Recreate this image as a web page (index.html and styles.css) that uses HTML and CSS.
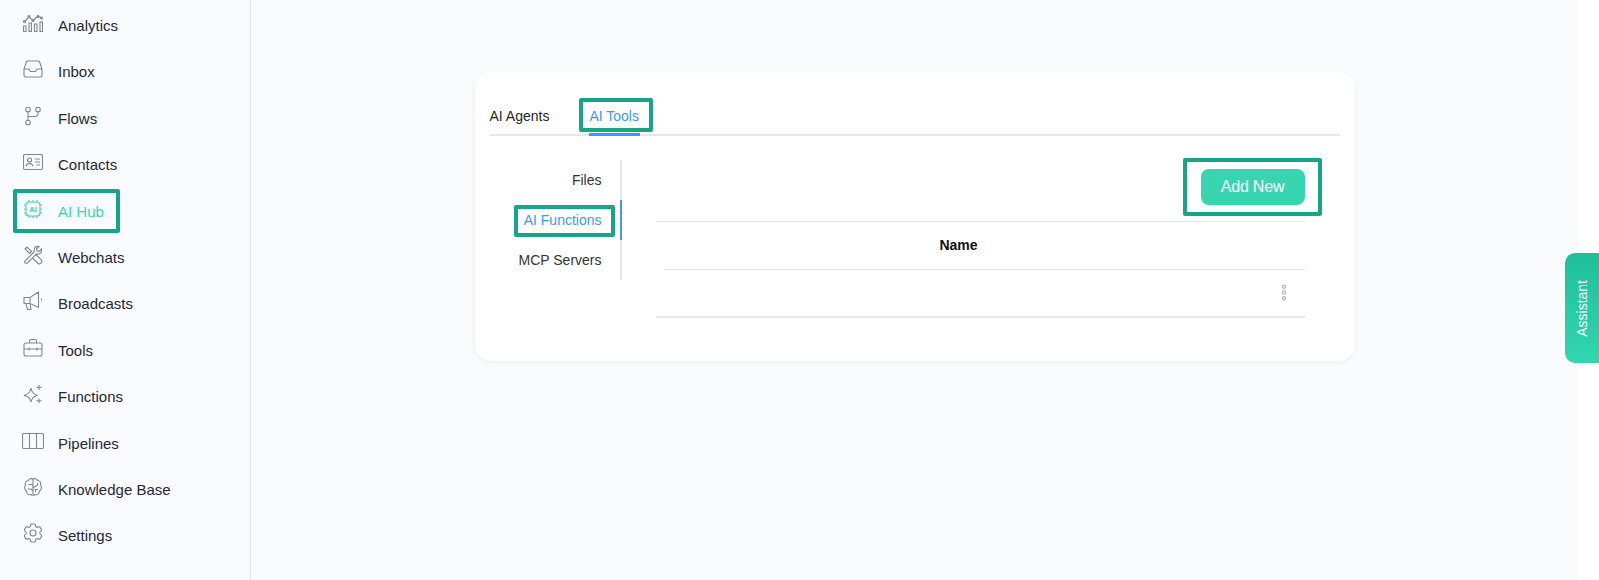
FILE: index.html
```html
<!DOCTYPE html>
<html lang="en">
<head>
  <meta charset="UTF-8">
  <title>AI Hub</title>
  <link rel="stylesheet" href="styles.css">
</head>
<body>
  <aside class="sidebar">
    <a class="nav-item"><svg class="nav-icon nav-icon-wide" viewBox="0 0 20 18"><path d="M1.500 7.500 6 3 10 6.500 15 2 18.500 4"/><circle cx="1.500" cy="7.500" r="1"/><circle cx="6" cy="2.500" r="1"/><circle cx="10" cy="6.500" r="1"/><circle cx="15" cy="2.500" r="1"/><circle cx="18.500" cy="4" r="1"/><rect x=".5" y="12" width="2.500" height="5.500"/><rect x="6" y="9" width="2.500" height="8.500"/><rect x="11.500" y="10" width="2.500" height="7.500"/><rect x="17" y="8" width="2.500" height="9.500"/></svg><span>Analytics</span></a>
    <a class="nav-item"><svg class="nav-icon" viewBox="0 0 20 20"><path d="M1 10 3.500 2.500Q4 2 5 2H15Q16 2 16.500 2.500L19 10V16Q19 18 17.500 18H2.500Q1 18 1 16ZM1 10H6L7.500 12.500H12.500L14 10H19"/></svg><span>Inbox</span></a>
    <a class="nav-item"><svg class="nav-icon" viewBox="0 0 20 20"><circle cx="5" cy="3.500" r="2.300"/><circle cx="15" cy="3.500" r="2.300"/><circle cx="5" cy="16.500" r="2.300"/><path d="M5 5.800V14.200M5 10.500H12Q15 10.500 15 7V5.800"/></svg><span>Flows</span></a>
    <a class="nav-item"><svg class="nav-icon nav-icon-wide" viewBox="0 0 20 16"><rect x=".5" y=".5" width="19" height="15" rx="1.500"/><circle cx="6.500" cy="6" r="2"/><path d="M3 12.500Q3.500 9.500 6.500 9.500T10 12.500M12 5H17M12 8H17M13.500 11H17"/></svg><span>Contacts</span></a>

    <a class="nav-item nav-item-active"><svg class="nav-icon" viewBox="0 0 20 20"><rect x="3" y="3" width="14" height="14" rx="3"/><path d="M6 1V3M10 1V3M14 1V3M6 17V19M10 17V19M14 17V19M1 6H3M1 10H3M1 14H3M17 6H19M17 10H19M17 14H19"/><text class="chip-label" x="10" y="12.800" text-anchor="middle">AI</text></svg><span>AI Hub</span><i class="mark"></i></a>

    <a class="nav-item"><svg class="nav-icon" viewBox="0 0 20 20"><path d="M2 4 4 2 8.500 6.500 6.500 8.500ZM11.500 11 13 9.500 18.500 15Q19.500 16.500 18 18T15 18.500L9.500 13M8 10 2 16Q1 17.500 2.500 18T4.500 18L10 12.500 13 9Q15 9.500 17 8.500T18.500 4L16 6.500 14 6 13.500 4 16 1.500Q14 1 12.500 2T11 7Z"/></svg><span>Webchats</span></a>
    <a class="nav-item"><svg class="nav-icon" viewBox="0 0 20 20"><path d="M1 6.500H7L15.500 1V16.500L7 12.500H1ZM3 12.500 4.500 18.500H8L7 12.500M7 6.500V12.500M18.500 7.500V9.500"/></svg><span>Broadcasts</span></a>
    <a class="nav-item"><svg class="nav-icon" viewBox="0 0 20 20"><rect x="1" y="5" width="18" height="13" rx="2"/><path d="M6.500 5V3Q6.500 1.500 8 1.500H12Q13.500 1.500 13.500 3V5M1 11H19M6 9.500V12.500M14 9.500V12.500"/></svg><span>Tools</span></a>
    <a class="nav-item"><svg class="nav-icon" viewBox="0 0 20 20"><path d="M8 4Q9 10 14.500 11.500 9 12.500 8 18 7 12.500 1 11.500 7 10 8 4ZM16 1V6M13.500 3.500H18.500M16 14.500V19M13.500 16.700H18.500"/></svg><span>Functions</span></a>
    <a class="nav-item"><svg class="nav-icon nav-icon-wider" viewBox="0 0 22 16"><rect x=".5" y=".5" width="21" height="15" rx="1.500"/><path d="M7.500 .5V15.500M14.500 .5V15.500"/></svg><span>Pipelines</span></a>
    <a class="nav-item"><svg class="nav-icon" viewBox="0 0 20 20"><path d="M10 2.500C8.500 1 6 1.500 5.500 3.500 3 3.500 1.500 6 2.500 8 1 10 1.500 13 3.500 14 3.500 16.500 6 18.500 8 17.500 9 18.500 11 18.500 12 17.500 14 18.500 16.500 16.500 16.500 14 18.500 13 19 10 17.500 8 18.500 6 17 3.500 14.500 3.500 14 1.500 11.500 1 10 2.500ZM10 2.500V17.500M5.500 7.500H8Q10 7.500 10 9.500M14.500 6V8L10 11M5 12H8L10 14M15 12.500H12.500V15"/></svg><span>Knowledge Base</span></a>
    <a class="nav-item"><svg class="nav-icon" viewBox="2 2 20 20"><circle cx="12" cy="12" r="3"/><path d="M9.594 3.940c.09-.542.56-.94 1.110-.94h2.593c.55 0 1.020.398 1.110.94l.213 1.281c.063.374.313.686.645.870.074.040.147.083.22.127.325.196.72.257 1.075.124l1.217-.456a1.125 1.125 0 0 1 1.370.49l1.296 2.247a1.125 1.125 0 0 1-.26 1.431l-1.003.827c-.293.241-.438.613-.43.992a7.723 7.723 0 0 1 0 .255c-.008.378.137.75.43.991l1.004.827c.424.35.534.955.26 1.430l-1.298 2.247a1.125 1.125 0 0 1-1.369.491l-1.217-.456c-.355-.133-.75-.072-1.076.124a6.470 6.470 0 0 1-.22.128c-.331.183-.581.495-.644.869l-.213 1.281c-.09.543-.56.94-1.110.94h-2.594c-.55 0-1.019-.398-1.110-.94l-.213-1.281c-.062-.374-.312-.686-.644-.87a6.520 6.520 0 0 1-.22-.127c-.325-.196-.72-.257-1.076-.124l-1.217.456a1.125 1.125 0 0 1-1.369-.49l-1.297-2.247a1.125 1.125 0 0 1 .26-1.431l1.004-.827c.292-.24.437-.613.43-.991a6.932 6.932 0 0 1 0-.255c.007-.38-.138-.751-.43-.992l-1.004-.827a1.125 1.125 0 0 1-.26-1.430l1.297-2.247a1.125 1.125 0 0 1 1.370-.491l1.216.456c.356.133.751.072 1.076-.124.072-.044.146-.086.22-.128.332-.183.582-.495.644-.869l.214-1.280Z"/></svg><span>Settings</span></a>
  </aside>

  <main class="content">
    <section class="card">
      <div class="tabs">
        <div class="tab">AI Agents</div>
        <div class="tab tab-active">AI Tools<i class="mark"></i></div>
      </div>
      <div class="panel">
        <div class="side-tabs">
          <div class="side-tab">Files</div>
          <div class="side-tab side-tab-active">AI Functions<i class="mark"></i></div>
          <div class="side-tab">MCP Servers</div>
        </div>
        <div class="table-wrap">
          <div class="toolbar">
            <button class="add-btn">Add New<i class="mark"></i></button>
          </div>
          <div class="table-head">Name</div>
          <div class="table-row">
            <svg class="dots" viewBox="0 0 5 16"><circle cx="2.500" cy="2.500" r="1.500"/><circle cx="2.500" cy="8" r="1.500"/><circle cx="2.500" cy="13.500" r="1.500"/></svg>
          </div>
        </div>
      </div>
    </section>
  </main>

  <div class="gutter"></div>
  <button class="assistant"><span>Assistant</span></button>
</body>
</html>
```

FILE: styles.css
```css
* {
  margin: 0;
  padding: 0;
  box-sizing: border-box;
}

body {
  font-family: 'Liberation Sans', Arial, sans-serif;
  background: #f9fafb;
  color: #1f2937;
  height: 580px;
  display: flex;
  overflow: hidden;
}

.mark {
  position: absolute;
  border: 4px solid #17a589;
  border-radius: 2px;
  pointer-events: none;
}

.sidebar {
  width: 251px;
  flex-shrink: 0;
  background: #fafbfe;
  border-right: 1px solid #e2e4e9;
  padding-top: 2.300px;
}

.nav-item {
  position: relative;
  height: 46.4px;
  padding-left: 22px;
  display: flex;
  align-items: center;
  gap: 14px;
  font-size: 15px;
}

.nav-item .mark {
  left: 13px;
  top: 1px;
  width: 107px;
  height: 44px;
}

.nav-icon {
  width: 20px;
  height: 20px;
  margin: -5px 1px 0;
  flex-shrink: 0;
  fill: none;
  stroke: #85878d;
  stroke-width: 1.100;
}

.nav-icon-wide {
  height: 18px;
}

.nav-icon-wider {
  width: 22px;
  height: 16px;
  margin-left: 0;
  margin-right: 0;
}

.nav-item-active {
  color: #38d6b0;
}

.nav-item-active .nav-icon {
  stroke: #38d6b0;
}

.chip-label {
  font-size: 7.500px;
  font-weight: 700;
  fill: #38d6b0;
  stroke: none;
}

.content {
  flex: 1;
  display: flex;
  justify-content: center;
  align-items: flex-start;
  padding-top: 72px;
}

.card {
  width: 880px;
  height: 289px;
  background: #fff;
  border-radius: 16px;
  box-shadow: 0 1px 4px rgba(0, 0, 0, 0.06);
  padding: 26px 15px 0;
}

.tabs {
  display: flex;
  gap: 40px;
  height: 38px;
  border-bottom: 2px solid #e5e7eb;
  font-size: 14px;
}

.tab {
  position: relative;
  line-height: 36px;
  height: 38px;
  color: #252525;
}

.tab-active {
  width: 51px;
  color: #4096ff;
  border-bottom: 3px solid #4096ff;
}

.tab .mark {
  left: -10.500px;
  top: 0;
  width: 74px;
  height: 34px;
}

.panel {
  display: flex;
  padding-top: 24px;
}

.side-tabs {
  width: 132px;
  height: 120px;
  border-right: 2px solid #e5e7eb;
}

.side-tab {
  position: relative;
  height: 40px;
  line-height: 40px;
  padding-right: 18px;
  margin-right: -2px;
  border-right: 2px solid transparent;
  text-align: right;
  font-size: 14px;
  color: #333;
}

.side-tab-active {
  color: #4096ff;
  border-right-color: #4096ff;
}

.side-tab .mark {
  right: 5px;
  top: 5px;
  width: 101px;
  height: 32px;
}

.table-wrap {
  width: 649px;
  margin-left: 34px;
}

.toolbar {
  height: 61px;
  display: flex;
  justify-content: flex-end;
  align-items: flex-start;
  padding-top: 9px;
}

.add-btn {
  position: relative;
  width: 104px;
  height: 36px;
  border: 0;
  border-radius: 8px;
  background: #38d6b0;
  color: #fff;
  font-family: inherit;
  font-size: 16px;
  letter-spacing: -0.200px;
}

.add-btn .mark {
  left: -18px;
  top: -11px;
  width: 139px;
  height: 58px;
}

.table-head {
  height: 48px;
  line-height: 47px;
  padding-right: 43px;
  border-top: 1px solid #e5e5e5;
  text-align: center;
  font-size: 14px;
  font-weight: 700;
  color: #111;
}

.table-row {
  height: 49px;
  position: relative;
  display: flex;
  justify-content: flex-end;
  align-items: center;
  padding-right: 18px;
  border-bottom: 2px solid #e5e7eb;
}

.table-row::before {
  content: "";
  position: absolute;
  left: 8px;
  right: 0;
  top: 0;
  border-top: 1px solid #e5e5e5;
}

.dots {
  width: 6px;
  height: 17px;
  fill: none;
  stroke: #b8b8b8;
  stroke-width: 1.200;
}

.gutter {
  width: 21px;
  flex-shrink: 0;
  background: #fff;
}

.assistant {
  position: absolute;
  right: 0;
  top: 253px;
  width: 34px;
  height: 110px;
  border: 0;
  border-radius: 10px 0 0 10px;
  background: linear-gradient(to bottom, #1fbf9c, #32d6b0);
  color: #fff;
  font-family: inherit;
  font-size: 14px;
  display: flex;
  align-items: center;
  justify-content: center;
}

.assistant span {
  writing-mode: vertical-rl;
  transform: rotate(180deg);
}
```
